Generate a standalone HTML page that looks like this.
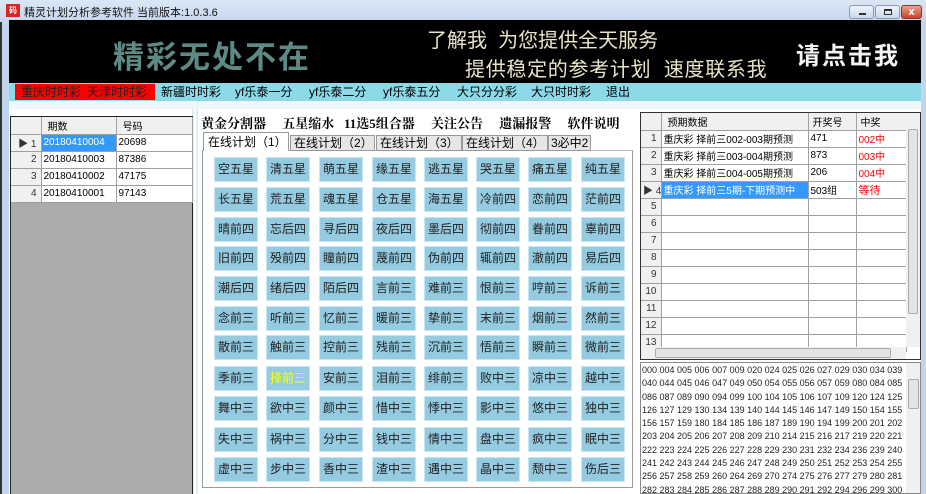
<!DOCTYPE html>
<html><head><meta charset="utf-8"><style>
*{margin:0;padding:0;box-sizing:border-box}
body{width:926px;height:494px;overflow:hidden;position:relative;background:#fff;font-family:"Liberation Sans","Noto Sans CJK SC",sans-serif;font-size:12px;color:#000}
.a{position:absolute}
.title{left:0;top:0;width:926px;height:22px;background:linear-gradient(#dbe7f5,#c5d7ee);}
.frameL{left:0;top:22px;width:9px;height:472px;background:#c0d6ee;border-left:2px solid #333}
.frameR{left:921px;top:22px;width:5px;height:472px;background:#c0d6ee}
.banner{left:9px;top:20px;width:912px;height:63px;background:#000}
.menu{left:9px;top:83px;width:912px;height:18px;background:#8cd9e8;font-size:12px;line-height:18px;white-space:nowrap}
.menu span{position:absolute;top:0}
.row{position:absolute;left:214px;height:25px}
.b{position:absolute;width:44px;height:25px;background:#95cbe0;border:1px solid #c8e6f2;font-size:12px;line-height:23px;text-align:center;color:#222}
.lt td,.rt td{border-right:1px solid #a0a0a0;border-bottom:1px solid #a0a0a0;height:17px;font-size:10px;padding-left:2px;white-space:nowrap;overflow:hidden}
table{border-collapse:collapse;table-layout:fixed}
.rh{background:#f0f0f0;text-align:right;padding-right:4px!important;color:#333}
.red{color:#f00}
.nums{font-family:"Liberation Sans",sans-serif;font-size:9px;line-height:13.3px;white-space:pre;color:#222}
.tab{position:absolute;top:135px;height:16px;background:#e6e6e6;border:1px solid #999;font-size:12px;line-height:15px;padding-left:3px;white-space:nowrap;overflow:hidden}
</style></head><body>
<div class="a title"></div>
<div class="a" style="left:6px;top:4px;width:14px;height:13px;background:#d22;color:#fff;font-size:8px;line-height:13px;text-align:center;font-weight:bold">码</div>
<div class="a" style="left:24px;top:4px;font-size:11px;color:#111">精灵计划分析参考软件 当前版本:1.0.3.6</div>
<div class="a" style="left:849px;top:5px;width:25px;height:14px;border:1px solid #8a9ab5;border-radius:3px;background:linear-gradient(#eef3fa,#cbd8ea)"><div class="a" style="left:9px;top:7px;width:7px;height:2px;background:#333"></div></div>
<div class="a" style="left:875px;top:5px;width:25px;height:14px;border:1px solid #8a9ab5;border-radius:3px;background:linear-gradient(#eef3fa,#cbd8ea)"><div class="a" style="left:8px;top:3px;width:8px;height:6px;border:1px solid #333;border-top-width:2px"></div></div>
<div class="a" style="left:901px;top:5px;width:21px;height:14px;border:1px solid #8b3a2a;border-radius:3px;background:linear-gradient(#e9a08f,#c7452c);color:#fff;font-size:11px;line-height:12px;text-align:center;font-weight:bold">x</div>
<div class="a frameL"></div><div class="a frameR"></div>
<div class="a banner">
 <div class="a" style="left:104px;top:12px;font-size:31px;font-weight:bold;color:#5e8a85;letter-spacing:2px;font-family:'Noto Sans CJK SC',sans-serif;white-space:nowrap">精彩无处不在</div>
 <div class="a" style="left:418px;top:4px;font-size:20px;color:#e8e4c8;white-space:nowrap">了解我&nbsp; 为您提供全天服务</div>
 <div class="a" style="left:456px;top:33px;font-size:20px;color:#e8e4c8;white-space:nowrap;letter-spacing:0.7px">提供稳定的参考计划&nbsp; 速度联系我</div>
 <div class="a" style="left:787px;top:16px;font-size:24px;font-weight:bold;color:#f4f4f4;letter-spacing:2px;white-space:nowrap">请点击我</div>
</div>
<div class="a menu">
 <div class="a" style="left:6px;top:1px;width:140px;height:16px;background:#f00"></div>
 <span style="left:12px;color:#222">重庆时时彩</span><span style="left:78px;color:#222">天津时时彩</span>
 <span style="left:152px">新疆时时彩</span><span style="left:226px">yf乐泰一分</span><span style="left:300px">yf乐泰二分</span><span style="left:374px">yf乐泰五分</span><span style="left:448px">大只分分彩</span><span style="left:522px">大只时时彩</span><span style="left:597px">退出</span>
</div>
<div class="a" style="left:9px;top:101px;width:912px;height:8px;background:#eef8fb"></div>
<!-- left panel -->
<div class="a" style="left:9px;top:109px;width:185px;height:385px;background:#fff;border-right:2px solid #ddeef5"></div>
<div class="a" style="left:10px;top:116px;width:183px;height:378px;background:#ababab;border:1px solid #222;border-bottom:none"></div>
<table class="a lt" style="left:11px;top:117px;width:181px;background:#fff">
<colgroup><col style="width:30px"><col style="width:75px"><col style="width:76px"></colgroup>
<tr style="background:#f0f0f0"><td style="height:15px"></td><td style="padding-left:6px">期数</td><td style="padding-left:6px">号码</td></tr>
<tr><td class="rh">▶ 1</td><td style="background:#3399ff;color:#fff">20180410004</td><td>20698</td></tr>
<tr><td class="rh">2</td><td>20180410003</td><td>87386</td></tr>
<tr><td class="rh">3</td><td>20180410002</td><td>47175</td></tr>
<tr><td class="rh">4</td><td>20180410001</td><td>97143</td></tr>
</table>
<!-- middle -->
<div class="a" style="left:196px;top:109px;width:441px;height:385px;border-left:2px solid #ddeef5"></div>
<div class="a" style="left:201px;top:113px;font-size:13px;font-weight:bold;white-space:nowrap;font-family:'Liberation Serif','Noto Serif CJK SC',serif">黄金分割器&nbsp;&nbsp;&nbsp;&nbsp; 五星缩水&nbsp;&nbsp; 11选5组合器&nbsp;&nbsp;&nbsp;&nbsp; 关注公告&nbsp;&nbsp;&nbsp;&nbsp; 遗漏报警&nbsp;&nbsp;&nbsp;&nbsp; 软件说明</div>
<div class="a" style="left:202px;top:150px;width:431px;height:338px;border:1px solid #9a9a9a;border-top-color:#c0c0c0"></div>
<div class="a" style="left:203px;top:132px;width:86px;height:19px;background:#fff;border:1px solid #999;border-bottom:none;font-size:12px;line-height:18px;padding-left:4px;white-space:nowrap">在线计划（1）</div>
<div class="tab" style="left:290px;width:85px">在线计划（2）</div>
<div class="tab" style="left:376px;width:86px">在线计划（3）</div>
<div class="tab" style="left:462px;width:86px">在线计划（4）</div>
<div class="tab" style="left:548px;width:43px;padding-left:2px">3必中2</div>

<div class="row" style="top:157px"><div class="b" style="left:0">空五星</div><div class="b" style="left:52px">清五星</div><div class="b" style="left:105px">萌五星</div><div class="b" style="left:158px">缘五星</div><div class="b" style="left:210px">逃五星</div><div class="b" style="left:262px">哭五星</div><div class="b" style="left:314px">痛五星</div><div class="b" style="left:367px">纯五星</div></div>
<div class="row" style="top:187px"><div class="b" style="left:0">长五星</div><div class="b" style="left:52px">荒五星</div><div class="b" style="left:105px">魂五星</div><div class="b" style="left:158px">仓五星</div><div class="b" style="left:210px">海五星</div><div class="b" style="left:262px">冷前四</div><div class="b" style="left:314px">恋前四</div><div class="b" style="left:367px">茫前四</div></div>
<div class="row" style="top:217px"><div class="b" style="left:0">晴前四</div><div class="b" style="left:52px">忘后四</div><div class="b" style="left:105px">寻后四</div><div class="b" style="left:158px">夜后四</div><div class="b" style="left:210px">墨后四</div><div class="b" style="left:262px">彻前四</div><div class="b" style="left:314px">眷前四</div><div class="b" style="left:367px">辜前四</div></div>
<div class="row" style="top:246px"><div class="b" style="left:0">旧前四</div><div class="b" style="left:52px">殁前四</div><div class="b" style="left:105px">瞳前四</div><div class="b" style="left:158px">蔑前四</div><div class="b" style="left:210px">伪前四</div><div class="b" style="left:262px">辄前四</div><div class="b" style="left:314px">澈前四</div><div class="b" style="left:367px">易后四</div></div>
<div class="row" style="top:276px"><div class="b" style="left:0">潮后四</div><div class="b" style="left:52px">绪后四</div><div class="b" style="left:105px">陌后四</div><div class="b" style="left:158px">言前三</div><div class="b" style="left:210px">难前三</div><div class="b" style="left:262px">恨前三</div><div class="b" style="left:314px">哼前三</div><div class="b" style="left:367px">诉前三</div></div>
<div class="row" style="top:306px"><div class="b" style="left:0">念前三</div><div class="b" style="left:52px">听前三</div><div class="b" style="left:105px">忆前三</div><div class="b" style="left:158px">暖前三</div><div class="b" style="left:210px">挚前三</div><div class="b" style="left:262px">末前三</div><div class="b" style="left:314px">烟前三</div><div class="b" style="left:367px">然前三</div></div>
<div class="row" style="top:335px"><div class="b" style="left:0">散前三</div><div class="b" style="left:52px">触前三</div><div class="b" style="left:105px">控前三</div><div class="b" style="left:158px">残前三</div><div class="b" style="left:210px">沉前三</div><div class="b" style="left:262px">悟前三</div><div class="b" style="left:314px">瞬前三</div><div class="b" style="left:367px">微前三</div></div>
<div class="row" style="top:366px"><div class="b" style="left:0">季前三</div><div class="b" style="left:52px;color:#ffff00">择前三</div><div class="b" style="left:105px">安前三</div><div class="b" style="left:158px">泪前三</div><div class="b" style="left:210px">绯前三</div><div class="b" style="left:262px">败中三</div><div class="b" style="left:314px">凉中三</div><div class="b" style="left:367px">越中三</div></div>
<div class="row" style="top:396px"><div class="b" style="left:0">舞中三</div><div class="b" style="left:52px">欲中三</div><div class="b" style="left:105px">颜中三</div><div class="b" style="left:158px">惜中三</div><div class="b" style="left:210px">悸中三</div><div class="b" style="left:262px">影中三</div><div class="b" style="left:314px">悠中三</div><div class="b" style="left:367px">独中三</div></div>
<div class="row" style="top:427px"><div class="b" style="left:0">失中三</div><div class="b" style="left:52px">祸中三</div><div class="b" style="left:105px">分中三</div><div class="b" style="left:158px">钱中三</div><div class="b" style="left:210px">情中三</div><div class="b" style="left:262px">盘中三</div><div class="b" style="left:314px">疯中三</div><div class="b" style="left:367px">眠中三</div></div>
<div class="row" style="top:457px"><div class="b" style="left:0">虚中三</div><div class="b" style="left:52px">步中三</div><div class="b" style="left:105px">香中三</div><div class="b" style="left:158px">渣中三</div><div class="b" style="left:210px">遇中三</div><div class="b" style="left:262px">晶中三</div><div class="b" style="left:314px">颓中三</div><div class="b" style="left:367px">伤后三</div></div>

<!-- right grid -->
<div class="a" style="left:640px;top:112px;width:281px;height:248px;border:1px solid #333;background:#fff"></div>
<table class="a rt" style="left:641px;top:113px;width:265px;background:#fff">
<colgroup><col style="width:20px"><col style="width:147px"><col style="width:48px"><col style="width:50px"></colgroup>
<tr style="background:#f0f0f0"><td style="height:15px"></td><td style="padding-left:6px">预期数据</td><td style="padding-left:4px">开奖号</td><td style="padding-left:4px">中奖</td></tr>
<tr><td class="rh">1</td><td>重庆彩 择前三002-003期预测</td><td>471</td><td class="red">002中</td></tr>
<tr><td class="rh">2</td><td>重庆彩 择前三003-004期预测</td><td>873</td><td class="red">003中</td></tr>
<tr><td class="rh">3</td><td>重庆彩 择前三004-005期预测</td><td>206</td><td class="red">004中</td></tr>
<tr><td class="rh">▶ 4</td><td style="background:#3399ff;color:#fff">重庆彩 择前三5期-下期预测中</td><td>503组</td><td class="red" style="font-size:11px">等待</td></tr>
<tr><td class="rh">5</td><td></td><td></td><td></td></tr>
<tr><td class="rh">6</td><td></td><td></td><td></td></tr>
<tr><td class="rh">7</td><td></td><td></td><td></td></tr>
<tr><td class="rh">8</td><td></td><td></td><td></td></tr>
<tr><td class="rh">9</td><td></td><td></td><td></td></tr>
<tr><td class="rh">10</td><td></td><td></td><td></td></tr>
<tr><td class="rh">11</td><td></td><td></td><td></td></tr>
<tr><td class="rh">12</td><td></td><td></td><td></td></tr>
<tr><td class="rh">13</td><td></td><td></td><td></td></tr>
</table>
<div class="a" style="left:906px;top:113px;width:14px;height:234px;background:#f0f0f0"></div>
<div class="a" style="left:908px;top:129px;width:10px;height:185px;background:#e4e4e4;border:1px solid #aaa;border-radius:2px"></div>
<div class="a" style="left:641px;top:347px;width:265px;height:12px;background:#f0f0f0"></div>
<div class="a" style="left:655px;top:348px;width:236px;height:10px;background:#e4e4e4;border:1px solid #aaa;border-radius:2px"></div>
<!-- numbers -->
<div class="a" style="left:640px;top:362px;width:281px;height:132px;border:1px solid #888;background:#fff;overflow:hidden">
<div class="a nums" style="left:1px;top:1px">000 004 005 006 007 009 020 024 025 026 027 029 030 034 039
040 044 045 046 047 049 050 054 055 056 057 059 080 084 085
086 087 089 090 094 099 100 104 105 106 107 109 120 124 125
126 127 129 130 134 139 140 144 145 146 147 149 150 154 155
156 157 159 180 184 185 186 187 189 190 194 199 200 201 202
203 204 205 206 207 208 209 210 214 215 216 217 219 220 221
222 223 224 225 226 227 228 229 230 231 232 234 236 239 240
241 242 243 244 245 246 247 248 249 250 251 252 253 254 255
256 257 258 259 260 264 269 270 274 275 276 277 279 280 281
282 283 284 285 286 287 288 289 290 291 292 294 296 299 300
301 302 304 306 309 310 314 319 320 321 322 324 326 329 340</div>
<div class="a" style="left:265px;top:0;width:15px;height:132px;background:#f0f0f0"></div>
<div class="a" style="left:267px;top:16px;width:11px;height:30px;background:#e4e4e4;border:1px solid #aaa;border-radius:2px"></div>
</div>
</body></html>
